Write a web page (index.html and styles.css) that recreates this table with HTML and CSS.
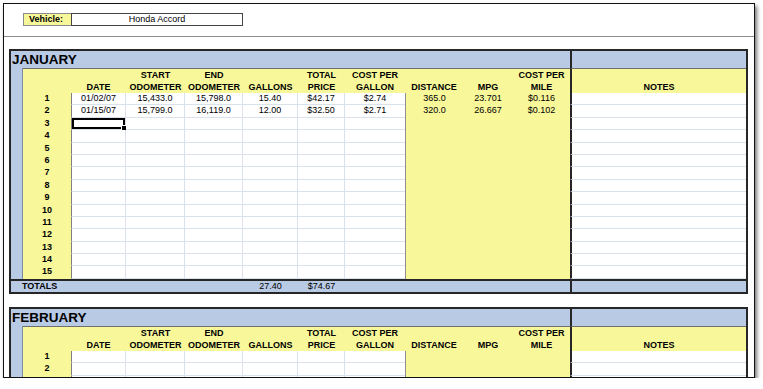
FILE: index.html
```
<!DOCTYPE html>
<html>
<head>
<meta charset="utf-8">
<link rel="stylesheet" href="styles.css">
</head>
<body>
<div class="frame">
  <div class="vehicle-bar">
    <div class="vehicle"><div class="vlabel">Vehicle:</div><div class="vvalue">Honda Accord</div></div>
  </div>
  <div class="sheet">
    <section class="month">
      <div class="title-row"><div class="title">JANUARY</div><div class="tnotes"></div></div>
      <div class="row head">
        <div class="strip"></div><div class="hnum"></div>
        <div class="hd">DATE</div><div class="hd">START<br>ODOMETER</div><div class="hd">END<br>ODOMETER</div><div class="hd">GALLONS</div><div class="hd">TOTAL<br>PRICE</div><div class="hd">COST PER<br>GALLON</div><div class="hd">DISTANCE</div><div class="hd">MPG</div><div class="hd">COST PER<br>MILE</div><div class="hd hnotes">NOTES</div>
      </div>
      <div class="row data"><div class="strip"></div><div class="num">1</div><div class="c date">01/02/07</div><div class="c">15,433.0</div><div class="c">15,798.0</div><div class="c">15.40</div><div class="c">$42.17</div><div class="c last">$2.74</div><div class="y dist">365.0</div><div class="y">23.701</div><div class="y">$0.116</div><div class="notes"></div></div>
      <div class="row data"><div class="strip"></div><div class="num">2</div><div class="c date">01/15/07</div><div class="c">15,799.0</div><div class="c">16,119.0</div><div class="c">12.00</div><div class="c">$32.50</div><div class="c last">$2.71</div><div class="y dist">320.0</div><div class="y">26.667</div><div class="y">$0.102</div><div class="notes"></div></div>
      <div class="row data"><div class="strip"></div><div class="num">3</div><div class="c date sel"></div><div class="c"></div><div class="c"></div><div class="c"></div><div class="c"></div><div class="c last"></div><div class="y dist"></div><div class="y"></div><div class="y"></div><div class="notes"></div></div>
      <div class="row data"><div class="strip"></div><div class="num">4</div><div class="c date"></div><div class="c"></div><div class="c"></div><div class="c"></div><div class="c"></div><div class="c last"></div><div class="y dist"></div><div class="y"></div><div class="y"></div><div class="notes"></div></div>
      <div class="row data"><div class="strip"></div><div class="num">5</div><div class="c date"></div><div class="c"></div><div class="c"></div><div class="c"></div><div class="c"></div><div class="c last"></div><div class="y dist"></div><div class="y"></div><div class="y"></div><div class="notes"></div></div>
      <div class="row data"><div class="strip"></div><div class="num">6</div><div class="c date"></div><div class="c"></div><div class="c"></div><div class="c"></div><div class="c"></div><div class="c last"></div><div class="y dist"></div><div class="y"></div><div class="y"></div><div class="notes"></div></div>
      <div class="row data"><div class="strip"></div><div class="num">7</div><div class="c date"></div><div class="c"></div><div class="c"></div><div class="c"></div><div class="c"></div><div class="c last"></div><div class="y dist"></div><div class="y"></div><div class="y"></div><div class="notes"></div></div>
      <div class="row data"><div class="strip"></div><div class="num">8</div><div class="c date"></div><div class="c"></div><div class="c"></div><div class="c"></div><div class="c"></div><div class="c last"></div><div class="y dist"></div><div class="y"></div><div class="y"></div><div class="notes"></div></div>
      <div class="row data"><div class="strip"></div><div class="num">9</div><div class="c date"></div><div class="c"></div><div class="c"></div><div class="c"></div><div class="c"></div><div class="c last"></div><div class="y dist"></div><div class="y"></div><div class="y"></div><div class="notes"></div></div>
      <div class="row data"><div class="strip"></div><div class="num">10</div><div class="c date"></div><div class="c"></div><div class="c"></div><div class="c"></div><div class="c"></div><div class="c last"></div><div class="y dist"></div><div class="y"></div><div class="y"></div><div class="notes"></div></div>
      <div class="row data"><div class="strip"></div><div class="num">11</div><div class="c date"></div><div class="c"></div><div class="c"></div><div class="c"></div><div class="c"></div><div class="c last"></div><div class="y dist"></div><div class="y"></div><div class="y"></div><div class="notes"></div></div>
      <div class="row data"><div class="strip"></div><div class="num">12</div><div class="c date"></div><div class="c"></div><div class="c"></div><div class="c"></div><div class="c"></div><div class="c last"></div><div class="y dist"></div><div class="y"></div><div class="y"></div><div class="notes"></div></div>
      <div class="row data"><div class="strip"></div><div class="num">13</div><div class="c date"></div><div class="c"></div><div class="c"></div><div class="c"></div><div class="c"></div><div class="c last"></div><div class="y dist"></div><div class="y"></div><div class="y"></div><div class="notes"></div></div>
      <div class="row data"><div class="strip"></div><div class="num">14</div><div class="c date"></div><div class="c"></div><div class="c"></div><div class="c"></div><div class="c"></div><div class="c last"></div><div class="y dist"></div><div class="y"></div><div class="y"></div><div class="notes"></div></div>
      <div class="row data"><div class="strip"></div><div class="num">15</div><div class="c date"></div><div class="c"></div><div class="c"></div><div class="c"></div><div class="c"></div><div class="c last"></div><div class="y dist"></div><div class="y"></div><div class="y"></div><div class="notes"></div></div>
      <div class="row totals"><div class="tlabel">TOTALS</div><div class="tval">27.40</div><div class="tval">$74.67</div><div class="tfill"></div><div class="tnotes"></div></div>
    </section>
    <section class="month">
      <div class="title-row"><div class="title">FEBRUARY</div><div class="tnotes"></div></div>
      <div class="row head">
        <div class="strip"></div><div class="hnum"></div>
        <div class="hd">DATE</div><div class="hd">START<br>ODOMETER</div><div class="hd">END<br>ODOMETER</div><div class="hd">GALLONS</div><div class="hd">TOTAL<br>PRICE</div><div class="hd">COST PER<br>GALLON</div><div class="hd">DISTANCE</div><div class="hd">MPG</div><div class="hd">COST PER<br>MILE</div><div class="hd hnotes">NOTES</div>
      </div>
      <div class="row data"><div class="strip"></div><div class="num">1</div><div class="c date"></div><div class="c"></div><div class="c"></div><div class="c"></div><div class="c"></div><div class="c last"></div><div class="y dist"></div><div class="y"></div><div class="y"></div><div class="notes"></div></div>
      <div class="row data"><div class="strip"></div><div class="num">2</div><div class="c date"></div><div class="c"></div><div class="c"></div><div class="c"></div><div class="c"></div><div class="c last"></div><div class="y dist"></div><div class="y"></div><div class="y"></div><div class="notes"></div></div>
      <div class="row data"><div class="strip"></div><div class="num">3</div><div class="c date"></div><div class="c"></div><div class="c"></div><div class="c"></div><div class="c"></div><div class="c last"></div><div class="y dist"></div><div class="y"></div><div class="y"></div><div class="notes"></div></div>
    </section>
  </div>
</div>
</body>
</html>
```

FILE: styles.css
```
* { box-sizing: border-box; }

body {
  margin: 0;
  background: #fff;
  font-family: "Liberation Sans", Arial, sans-serif;
  font-size: 9px;
  color: #000;
}

.frame {
  margin: 3px 0 0 3px;
  width: 752px;
  height: 375px;
  border: 1px solid #111;
  overflow: hidden;
  background: #fff;
  box-shadow: 2px 3px 4px rgba(0, 0, 0, 0.55);
}

.vehicle-bar {
  height: 33px;
  border-bottom: 1px solid #8c8c8c;
  padding: 9px 0 0 19px;
}

.vehicle {
  display: flex;
  width: 220px;
  height: 13px;
}

.vlabel {
  width: 48px;
  background: #f8f89b;
  border: 1px solid #8a8a8a;
  border-right: none;
  font-weight: bold;
  padding-left: 5px;
  line-height: 11px;
}

.vvalue {
  flex: 1;
  border: 1px solid #444;
  text-align: center;
  line-height: 11px;
}

.sheet {
  padding: 12px 6px 0 5px;
}

.month {
  width: 739px;
  border: 2px solid #262626;
  margin-bottom: 13px;
}

.title-row {
  display: grid;
  grid-template-columns: 559px 176px;
  height: 17px;
  background: #b9cbe4;
}

.title {
  font-size: 13.5px;
  font-weight: bold;
  line-height: 17px;
  padding-left: 1px;
}

.tnotes {
  border-left: 2px solid #262626;
  background: #b9cbe4;
}

.row {
  display: grid;
  grid-template-columns: 12px 48px 55px 59px 58px 55px 47px 60px 58px 50px 57px 176px;
}

.strip {
  background: #b9cbe4;
  border-right: 1px solid #7d8ca6;
}

.head {
  height: 25px;
}

.hnum {
  background: #f8f89b;
  border-top: 1px solid #6f6f6f;
}

.hd {
  background: #f8f89b;
  border-top: 1px solid #6f6f6f;
  border-bottom: 1px solid #555;
  display: flex;
  align-items: flex-end;
  justify-content: center;
  text-align: center;
  font-weight: bold;
  line-height: 12px;
  padding-bottom: 1px;
  white-space: nowrap;
}

.hnotes {
  border-left: 2px solid #262626;
}

.data {
  height: 12.4px;
}

.num {
  background: #f8f89b;
  font-weight: bold;
  text-align: center;
  line-height: 11px;
}

.c {
  background: #fff;
  border-right: 1px solid #d9e1ed;
  border-bottom: 1px solid #d9e1ed;
  text-align: center;
  line-height: 11px;
  position: relative;
}

.c.last {
  border-right: none;
}

.date {
  border-left: 1px solid #7f7f7f;
}

.sel {
  box-shadow: inset 0 0 0 2px #000;
}

.sel::after {
  content: "";
  position: absolute;
  right: -3px;
  bottom: -3px;
  width: 5px;
  height: 5px;
  background: #000;
  border: 1px solid #fff;
}

.y {
  background: #f8f89b;
  text-align: center;
  line-height: 11px;
}

.dist {
  border-left: 1px solid #8f8f8f;
}

.notes {
  background: #fff;
  border-left: 2px solid #262626;
  border-bottom: 1px solid #d9e1ed;
}

.totals {
  height: 13px;
  background: #b9cbe4;
  border-top: 2px solid #262626;
}

.tlabel {
  grid-column: 1 / 6;
  font-weight: bold;
  padding-left: 11px;
  line-height: 11px;
}

.tval {
  text-align: center;
  line-height: 11px;
}

.tfill {
  grid-column: 8 / 12;
}

.totals .tnotes {
  grid-column: 12;
}
```
